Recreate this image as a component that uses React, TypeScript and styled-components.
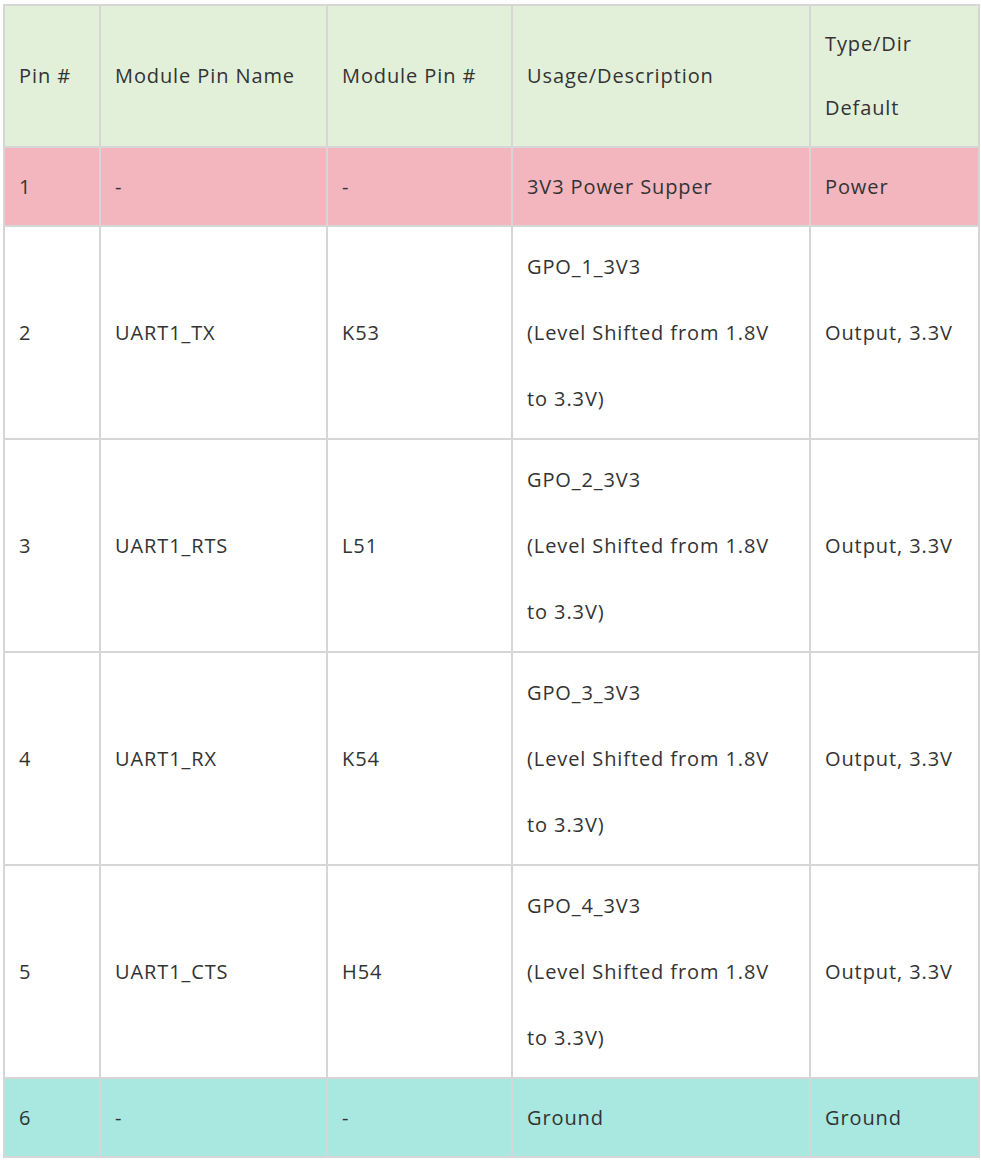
import React from 'react';
import styled, { createGlobalStyle } from 'styled-components';

const GlobalStyle = createGlobalStyle`
  body {
    margin: 0;
    background: #fff;
    font-family: 'Open Sans', 'Noto Sans', sans-serif;
  }
`

const Wrapper = styled.div`
  padding: 4px 3px 0 3px;
`

const Table = styled.table`
  width: 975px;
  border-collapse: collapse;
  table-layout: fixed;
  color: #333;
  font-size: 20px;
  letter-spacing: 0.9px;
`

const Row = styled.tr<{ $bg?: string; $height: number }>`
  height: ${p => p.$height}px;
  background: ${p => p.$bg || '#fff'};
`

const Cell = styled.td`
  border: 2px solid #d6d6d6;
  padding: 0 14px;
  vertical-align: middle;
  line-height: 66px;
  white-space: nowrap;
`

const HeadCell = styled(Cell).attrs({ as: 'th' })`
  font-weight: 400;
  text-align: left;
  line-height: 64px;
`

const widths = [96, 227, 185, 298, 169]

type Pin = {
  pin: string,
  name: string,
  modPin: string,
  usage: string[],
  type: string,
  bg?: string,
}

const pins: Pin[] = [
  { pin: '1', name: '-', modPin: '-', usage: ['3V3 Power Supper'], type: 'Power', bg: '#f4b6be' },
  { pin: '2', name: 'UART1_TX', modPin: 'K53', usage: ['GPO_1_3V3', '(Level Shifted from 1.8V', 'to 3.3V)'], type: 'Output, 3.3V' },
  { pin: '3', name: 'UART1_RTS', modPin: 'L51', usage: ['GPO_2_3V3', '(Level Shifted from 1.8V', 'to 3.3V)'], type: 'Output, 3.3V' },
  { pin: '4', name: 'UART1_RX', modPin: 'K54', usage: ['GPO_3_3V3', '(Level Shifted from 1.8V', 'to 3.3V)'], type: 'Output, 3.3V' },
  { pin: '5', name: 'UART1_CTS', modPin: 'H54', usage: ['GPO_4_3V3', '(Level Shifted from 1.8V', 'to 3.3V)'], type: 'Output, 3.3V' },
  { pin: '6', name: '-', modPin: '-', usage: ['Ground'], type: 'Ground', bg: '#a9e7e1' },
]

const App: React.FC = () => {
  return (
    <Wrapper>
      <GlobalStyle />
      <Table>
        <colgroup>
          {widths.map((w, i) => <col key={i} style={{ width: w }} />)}
        </colgroup>
        <thead>
          <Row $bg='#e2f0da' $height={142}>
            <HeadCell>Pin #</HeadCell>
            <HeadCell>Module Pin Name</HeadCell>
            <HeadCell>Module Pin #</HeadCell>
            <HeadCell>Usage/Description</HeadCell>
            <HeadCell>Type/Dir<br />Default</HeadCell>
          </Row>
        </thead>
        <tbody>
          {pins.map(p => (
            <Row key={p.pin} $bg={p.bg} $height={p.usage.length > 1 ? 213 : 79}>
              <Cell>{p.pin}</Cell>
              <Cell>{p.name}</Cell>
              <Cell>{p.modPin}</Cell>
              <Cell>
                {p.usage.map((line, i) => (
                  <React.Fragment key={i}>{i > 0 && <br />}{line}</React.Fragment>
                ))}
              </Cell>
              <Cell>{p.type}</Cell>
            </Row>
          ))}
        </tbody>
      </Table>
    </Wrapper>
  )
}

export default App;
